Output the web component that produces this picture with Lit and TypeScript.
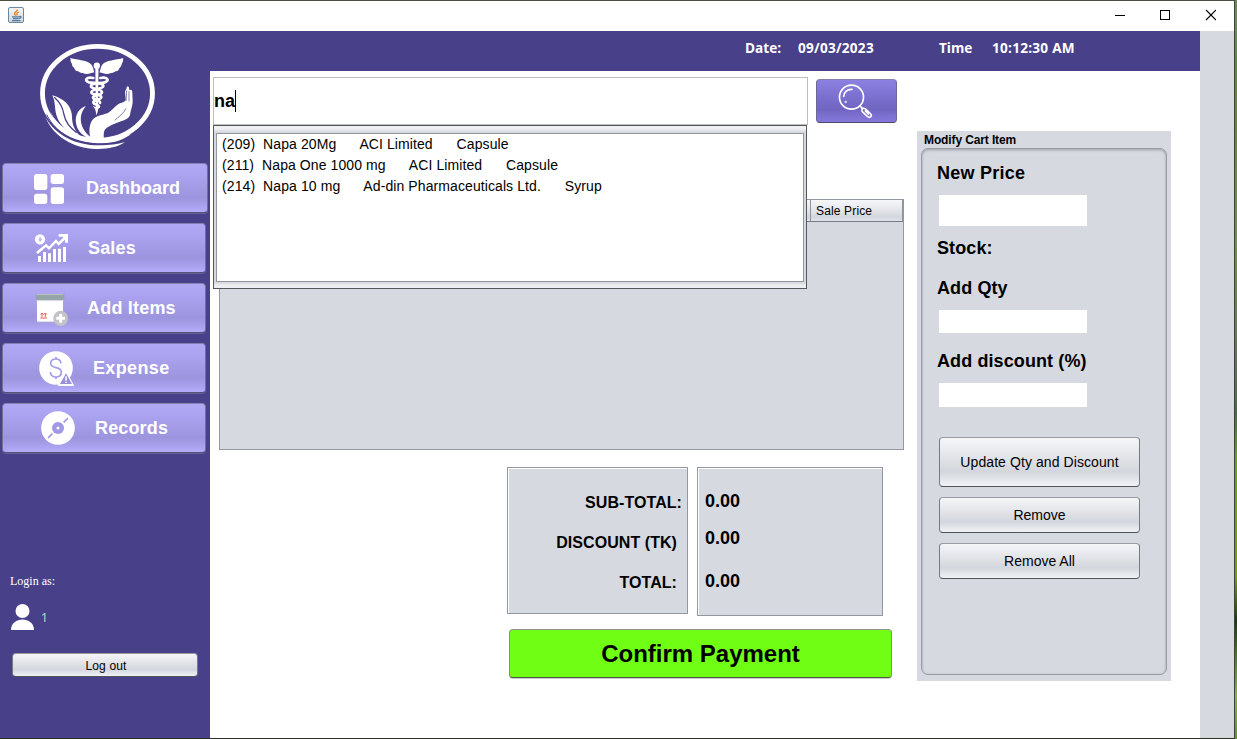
import { LitElement, html, css } from "lit";
import { customElement } from "lit/decorators.js";

const logo = html`<svg class="logo" viewBox="0 0 405 360">
  <g fill="#fff">
    <ellipse cx="202.500" cy="172" rx="165" ry="141" fill="none" stroke="#fff" stroke-width="14.500" />
    <path d="M46 243 C78 300 140 328 205 328 C240 328 262 324 285 319 C262 334 232 340 198 339 C130 337 70 302 46 243Z" />
    <path d="M60 225 C85 285 140 322 215 322 C255 322 285 310 305 292 C280 305 245 310 205 309 C135 307 88 280 60 225Z" />
    <path d="M50 236 C78 292 135 324 205 324.500 C225 325 250 322 268 317" fill="none" stroke="#49408a" stroke-width="3" />
    <path d="M67 178 C99 187 124 207 126 240 C126 261 131 274 139 287 C146 298 158 304 172 309 C120 300 84 268 77 228 C74 205 74 192 67 178Z" />
    <path d="M73 184 C93 202 98 216 102 236 C106 258 118 274 140 290" fill="none" stroke="#49408a" stroke-width="4" />
    <path d="M168 210 C136 221 131 255 145 281 C155 297 172 307 194 311 L190 308 C157 290 137 245 168 210Z" />
    <path d="M182 310 C175 283 178 260 192 247 C205 237 224 237 237 229 C250 220 258 207 270 202 C278 199 286 199 287 190 L285 168 C286 161 290 160 290 154 C292 148 297 150 297 156 L298 163 C304 158 307 163 307 170 L308 198 C307 213 302 222 300 236 C298 246 286 251 273 256 C252 264 231 272 224 282 C220 290 221 303 222 312 L190 314Z" />
    <path d="M254 253 C266 242 281 233 288 217 M290 163 L288 195 M297 166 L297 196" fill="none" stroke="#49408a" stroke-width="2" />
    <circle cx="200.500" cy="89" r="9.500" />
    <path d="M196 92 H205.500 L204 210 L200 238 L197 210Z" />
    <path d="M121 66 C143 72 173 72 185 87 C191 96 191 104 193 109 C181 112 171 117 158 111 C151 112 148 107 144 106 C136 105 134 99 132 95 C125 90 127 83 124 80 C120 75 123 71 121 66Z" />
    <path d="M280 66 C258 72 228 72 216 87 C211 96 211 104 208 109 C220 112 230 117 243 111 C250 112 253 107 257 106 C265 105 267 99 269 95 C276 90 274 83 277 80 C281 75 278 71 280 66Z" />
    <g fill="none" stroke="#fff" stroke-width="8" stroke-linecap="round">
      <path d="M190 126 C168 121 161 135 177 139 C192 142 221 139 220 151 C218 160 184 158 184 169 C185 179 215 173 214 184 C212 193 188 190 190 200 C192 208 208 203 206 213" />
      <path d="M211 126 C233 121 240 135 224 139 C209 143 181 140 183 152 C185 160 217 158 216 169 C215 179 188 175 189 185 C191 193 212 190 210 201" />
    </g>
    <path d="M188 210l12 4 12-4-7 8-5 20-5-20z" />
  </g>
</svg>`;

const dashboardIcon = html`<svg class="nav-icon" viewBox="90 42 132 108"><g fill="#fff">
  <rect x="102" y="54" width="40" height="48" rx="8" /><rect x="152" y="54" width="40" height="30" rx="8" />
  <rect x="102" y="113" width="40" height="31" rx="8" /><rect x="152" y="94" width="40" height="50" rx="8" /></g></svg>`;

const salesIcon = html`<svg class="nav-icon" viewBox="90 225 132 108"><g fill="#fff">
  <circle cx="120" cy="253" r="15.500" /><path d="M114 303h9v18h-9z M129 291h9v30h-9z M144 295h9v26h-9z M159 282h9v39h-9z M174 281h9v40h-9z M189 276h9v45h-9z" />
  <path d="M111 294 L138 271 L147 280 L168 258 L176 267 L197 246" fill="none" stroke="#fff" stroke-width="7.500" />
  <path d="M176 237 H204 V263 H195 V252 L189 245 H176Z" /></g>
  <ellipse cx="120.500" cy="253" rx="4" ry="6.500" fill="#a79eeb" /><path d="M120 249v8" stroke="#fff" stroke-width="2" /></svg>`;

const addIcon = html`<svg class="nav-icon" viewBox="90 -30 132 108">
  <rect x="111" y="-18" width="78" height="84" fill="#fff" /><path d="M111 65h78" stroke="#d9dadd" stroke-width="3" />
  <rect x="107" y="-17" width="86" height="17" fill="#95a5a5" /><path d="M110 2h80" stroke="#d2d5df" stroke-width="3" />
  <path d="M121 54h20 M126 51V40 M136 51V40 M121.500 43.500l4.500-4.500 4.500 4.500 M131.500 43.500l4.500-4.500 4.500 4.500" stroke="#e65b4f" stroke-width="3" fill="none" />
  <circle cx="182" cy="55" r="22.500" fill="#c2c3c8" /><path d="M169 55h26 M182 42v26" stroke="#fff" stroke-width="9" /></svg>`;

const expenseIcon = html`<svg class="nav-icon" viewBox="102 150 132 108"><circle cx="168" cy="204" r="50.500" fill="#fff" />
  <path d="M183 190 C182 180 176 177 168 177 C158 177 152 182 152 190 C152 209 184 197 184 216 C184 227 177 231 168 231 C158 231 152 226 151 216 M168 171v8 M168 229v8" fill="none" stroke="#a49ce8" stroke-width="5" />
  <path d="M198 212 L223 258 H173Z" fill="#fff" /><path d="M198 220 L216 252 H180Z" fill="#9991d5" />
  <path d="M198 229v13 M198 245v4" stroke="#fff" stroke-width="4.500" /></svg>`;

const recordsIcon = html`<svg class="nav-icon" viewBox="108 330 132 108"><circle cx="174" cy="384" r="50.500" fill="#fff" />
  <circle cx="174" cy="384" r="18" fill="#a098e2" /><circle cx="174" cy="384" r="4.500" fill="#fff" />
  <path d="M204 354 L191 367 M157 401 L144 414" stroke="#a098e2" stroke-width="5" /></svg>`;

const searchIcon = html`<svg class="glass" viewBox="470 156 117 114"><g fill="none" stroke="#fff" stroke-width="5" stroke-linecap="round">
  <circle cx="516.500" cy="201.500" r="36" /><path d="M493 199 C494 186 504 177 518 178" /><circle cx="499" cy="216" r="1" />
  <path d="M542 228 L549 235" /><path d="M551 235 C556 234 559 237 563 241 L574 252 C579 258 572 265 565 260 L551 247 C546 242 547 237 551 235Z M558 243 L567 252" /></g></svg>`;

const javaIcon = html`<svg class="java" viewBox="0 0 16 16"><defs><linearGradient id="tile" x1="0" y1="0" x2="0" y2="1"><stop stop-color="#f7f7f7" /><stop offset="1" stop-color="#cfd3d9" /></linearGradient></defs>
  <rect x=".5" y=".5" width="15" height="15" rx="1.500" fill="url(#tile)" stroke="#6988a2" />
  <path d="M9.500 2.500 C9.500 4.500 6 5 6.500 7 L7.800 8.700 M10.800 5 C8.500 6 8.500 6.500 9.300 8.500" fill="none" stroke="#ed7f22" stroke-width="1.300" />
  <path d="M4 9.800h7.500 M5 11.700h5.500 M4 13.600h8.500 M11.500 9.500 C13.800 9 13.500 11 11 11.500" fill="none" stroke="#527b9e" stroke-width="1.200" /></svg>`;

const nav = [
  { key: "dashboard", text: "Dashboard", icon: dashboardIcon },
  { key: "sales", text: "Sales", icon: salesIcon },
  { key: "items", text: "Add Items", icon: addIcon },
  { key: "expense", text: "Expense", icon: expenseIcon },
  { key: "records", text: "Records", icon: recordsIcon },
];

const suggestions = [
  "(209)  Napa 20Mg      ACI Limited      Capsule",
  "(211)  Napa One 1000 mg      ACI Limited      Capsule",
  "(214)  Napa 10 mg      Ad-din Pharmaceuticals Ltd.      Syrup",
];

@customElement("app-root")
export class AppRoot extends LitElement {
  static styles = css`
    :host { display: flex; width: 1237px; height: 739px; overflow: hidden; background: #fff; color: #000; font-family: "Liberation Sans", Arial, sans-serif; }
    * { box-sizing: border-box; }
    svg { display: block; flex: none; }
    .window { display: flex; flex-direction: column; width: 1234px; height: 739px; border-top: 1px solid #4c5044; border-bottom: 1px solid #2b3020; }
    .desktop { width: 3px; border-left: 1px solid #3f4638; background: linear-gradient(#6e8a5d 0 3%, #5f8a45 8%, #6b8530 15%, #71923f 33%, #65725f 48%, #4c6a4a 56%, #6ca01c 62%, #7a9e0d 78%, #1c3814 84%, #517a25 89%, #8ab13d 94%, #679329); }
    .titlebar { display: flex; align-items: center; height: 30px; padding: 0 18px 0 8px; background: #fff; flex: none; }
    .java { width: 16px; height: 16px; margin-top: -2px; }
    .controls { width: 101px; height: 12px; margin: -2px 0 0 auto; }
    .body { display: flex; flex: 1; min-height: 0; background: #d6d9e0; }
    .sidebar { width: 210px; background: #49408a; padding-top: 5px; display: flex; flex-direction: column; }
    .logo { width: 135px; height: 120px; margin: 0 0 7px 30px; }
    .nav { display: flex; flex-direction: column; gap: 10px; padding-left: 2px; }
    button { font-family: inherit; margin: 0; padding: 0; border: 1px solid #9a9ca2; border-right-color: #777a80; border-left-color: #777a80; border-bottom-color: #505358; border-radius: 4px; color: #000; text-align: center; }
    .nav-button { width: 204px; height: 50px; display: flex; align-items: center; padding-left: 27px; color: #fff; font-size: 18px; font-weight: bold; background: linear-gradient(#b1a8f6, #aaa1ee 30%, #9c94dd 70%, #b4abfa); border-color: #8581b1 #716e98 #555475; box-shadow: 0 1px #635d98; }
    .dashboard { width: 206px; }
    .nav-icon { width: 44px; height: 36px; margin-right: 12px; }
    .sales { letter-spacing: .15px; }
    .sales .nav-icon { margin-right: 14px; }
    .items { letter-spacing: .2px; }
    .items .nav-icon { margin-right: 13px; }
    .expense { padding-left: 31px; letter-spacing: .35px; }
    .expense .nav-icon { margin-right: 15px; }
    .records { padding-left: 33px; letter-spacing: .15px; }
    .records .nav-icon { margin-right: 15px; }
    .account { margin: 120px 0 0 10px; color: #fff; }
    .login { font-family: "Liberation Serif", serif; font-size: 12px; line-height: 16px; }
    .user { display: flex; align-items: center; gap: 7px; margin: 13px 0 0 1px; height: 30px; color: #b8dfbd; font: 12px/16px "Noto Sans", sans-serif; }
    .user span { padding-top: 1px; }
    .logout { display: block; width: 186px; height: 24px; margin: 21px 0 0 2px; font-size: 12px; padding: 1px 0 0 2px; letter-spacing: .15px; }
    .silver { background: linear-gradient(#f5f6f8, #e4e6ea 35%, #d3d6dc 70%, #f0f2f7); }
    .main { width: 990px; background: #fff; display: flex; flex-direction: column; }
    .header { height: 40px; background: #49408a; color: #fff; display: flex; padding: 7px 0 0 535px; font: bold 13.600px/20px "Open Sans", sans-serif; flex: none; }
    .date-label { width: 53px; } .date { width: 141px; } .time-label { width: 53px; }
    .date, .time { letter-spacing: .25px; }
    .content { display: flex; flex: 1; }
    .cart { width: 707px; padding: 6px 0 0 3px; display: flex; flex-direction: column; align-items: flex-start; }
    .search-row { display: flex; position: relative; height: 48px; }
    .field { width: 595px; height: 48px; border: 1px solid #bebebe; font-size: 18px; font-weight: bold; display: flex; align-items: center; }
    .field span { width: 21px; }
    .caret { width: 1px; height: 22px; background: #000; }
    .search { width: 81px; height: 44px; margin: 2px 0 0 8px; display: flex; justify-content: center; align-items: center; background: linear-gradient(#8c81e0, #7d72d1 35%, #7165c2 70%, #8679dd); border-color: #8581ad #6c6799 #4c4969; }
    .glass { width: 39px; height: 38px; margin: -1px 2px 0 0; }
    .popup { position: absolute; z-index: 2; left: 0; top: 48px; width: 594px; height: 164px; border: 1px solid #555759; padding: 7px 2px 6px; background: linear-gradient(#eff0f3 0 3px, #d6d9e0 6px 157px, #edeef1 159px); }
    .list { height: 149px; border: 1px solid #9297a1; background: #fff; padding: 0 0 0 5px; }
    .option { font-size: 14px; line-height: 21px; white-space: pre; letter-spacing: .09px; }
    .table { margin: 74px 0 0 6px; width: 685px; height: 251px; border: 1px solid #9297a1; background: #d6d9e0; }
    .thead { height: 22px; border-bottom: 1px solid #777c88; background: linear-gradient(#f6f7f9, #e3e5e9 50%, #d3d6dc 80%, #dfe2e8); display: flex; justify-content: flex-end; }
    .th { width: 93px; border-left: 1px solid #8e939c; border-right: 1px solid #8e939c; padding-left: 5px; font-size: 12px; line-height: 22px; letter-spacing: .15px; }
    .totals { display: flex; gap: 9px; margin: 17px 0 0 294px; }
    .box { border: 1px solid #9297a1; background: #d6d9e0; box-shadow: inset 1px 1px #fff; font-weight: bold; }
    .labels { width: 181px; height: 147px; padding-top: 25px; text-align: right; font-size: 16px; line-height: 20px; letter-spacing: .06px; }
    .labels div { margin: 0 5px 20px 0; }
    .labels .in { margin-right: 10px; }
    .values { width: 186px; height: 149px; padding: 23px 0 0 7px; font-size: 18px; line-height: 20px; }
    .values div { height: 37px; }
    .values .second { height: 43px; }
    .confirm { width: 383px; height: 49px; margin: 13px 0 0 296px; background: #70ff14; font-size: 24px; font-weight: bold; border-color: #909590 #809380 #4b5c46; box-shadow: 0 1px #c9cdca; }
    .modify { width: 254px; height: 550px; margin-top: 60px; background: #d6d9e0; padding: 2px 4px 6px; }
    .caption { font-size: 12px; line-height: 14px; font-weight: bold; letter-spacing: -.12px; padding-left: 3px; height: 15px; }
    .fieldset { height: 527px; border: 1px solid #989ba1; border-radius: 7px; box-shadow: inset 0 1px 3px #9a9da4; padding: 14px 0 0 15px; display: flex; flex-direction: column; align-items: flex-start; }
    .label { font-size: 18px; line-height: 20px; font-weight: bold; letter-spacing: .1px; }
    .label.price { letter-spacing: .25px; }
    .input { width: 148px; height: 31px; background: #fff; margin: 12px 0 12px 2px; }
    .label.qty { margin-top: 20px; }
    .input.small { height: 23px; margin: 12px 0 18px 2px; }
    .input.discount { height: 24px; margin-bottom: 30px; }
    .action { width: 201px; height: 36px; margin: 0 0 10px 2px; font-size: 14px; }
    .action.tall { height: 50px; letter-spacing: .08px; }
  `;

  render() {
    return html`
      <div class="window">
        <div class="titlebar">${javaIcon}
          <svg class="controls" viewBox="0 0 101 12"><path d="M0 6.500h10 M45.500 1.500h9v9h-9z" fill="none" stroke="#000" shape-rendering="crispEdges" /><path d="M91 1l10 10 M101 1l-10 10" stroke="#000" stroke-width="1.100" /></svg>
        </div>
        <div class="body">
          <aside class="sidebar">
            ${logo}
            <nav class="nav">${nav.map((n) => html`<button class="nav-button ${n.key}">${n.icon}<span>${n.text}</span></button>`)}</nav>
            <div class="account">
              <div class="login">Login as:</div>
              <div class="user"><svg width="23" height="26" viewBox="0 0 23 26"><circle cx="11.500" cy="7" r="7" fill="#fff" /><path d="M0 26 C0 12 23 12 23 26Z" fill="#fff" /></svg><span>1</span></div>
              <button class="logout silver">Log out</button>
            </div>
          </aside>
          <main class="main">
            <header class="header"><span class="date-label">Date:</span><span class="date">09/03/2023</span><span class="time-label">Time</span><span class="time">10:12:30 AM</span></header>
            <div class="content">
              <section class="cart">
                <div class="search-row">
                  <div class="field"><span>na</span><i class="caret"></i></div>
                  <button class="search">${searchIcon}</button>
                  <div class="popup"><div class="list">${suggestions.map((s) => html`<div class="option">${s}</div>`)}</div></div>
                </div>
                <div class="table"><div class="thead"><div class="th">Sale Price</div></div></div>
                <div class="totals">
                  <div class="box labels"><div>SUB-TOTAL:</div><div class="in">DISCOUNT (TK)</div><div class="in">TOTAL:</div></div>
                  <div class="box values"><div>0.00</div><div class="second">0.00</div><div>0.00</div></div>
                </div>
                <button class="confirm">Confirm Payment</button>
              </section>
              <section class="modify">
                <div class="caption">Modify Cart Item</div>
                <div class="fieldset">
                  <div class="label price">New Price</div><div class="input"></div>
                  <div class="label">Stock:</div>
                  <div class="label qty">Add Qty</div><div class="input small"></div>
                  <div class="label">Add discount (%)</div><div class="input small discount"></div>
                  <button class="action tall silver">Update Qty and Discount</button>
                  <button class="action silver">Remove</button>
                  <button class="action silver">Remove All</button>
                </div>
              </section>
            </div>
          </main>
        </div>
      </div>
      <div class="desktop"></div>`;
  }
}
